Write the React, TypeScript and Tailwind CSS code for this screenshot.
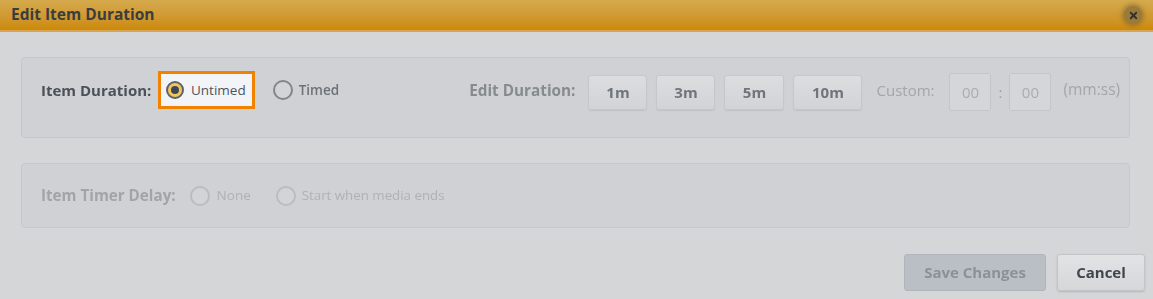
import { X } from "lucide-react";

const font = { fontFamily: '"Source Sans Pro", "Open Sans", "Noto Sans", sans-serif' };

function Radio({ checked, dim }: { checked?: boolean; dim?: boolean }) {
  return (
    <span
      className={`flex flex-shrink-0 items-center justify-center rounded-full border-2 ${
        checked
          ? "h-[18px] w-[18px] border-[#5b636b] bg-[#f4c55c]"
          : dim
          ? "h-[20px] w-[20px] border-[#b9bdc1] bg-[#d3d4d7]"
          : "h-[20px] w-[20px] border-[#80868c] bg-[#d3d4d7]"
      }`}
    >
      {checked && <span className="h-[8px] w-[8px] rounded-full bg-[#3b4752]" />}
    </span>
  );
}

function DurBtn({ label, w }: { label: string; w: string }) {
  return (
    <button
      className={`flex h-[35px] ${w} items-center justify-center rounded-[3px] border border-[#c5c7ca] bg-gradient-to-b from-[#dcdddf] to-[#d2d3d6] text-[15px] font-bold text-[#6f757b] shadow-[0_1px_1px_rgba(0,0,0,0.08)]`}
    >
      {label}
    </button>
  );
}

export default function App() {
  return (
    <div className="relative h-[299px] w-[1153px] overflow-hidden bg-[#d5d6d8]" style={font}>
      <div className="flex h-full flex-col blur-[0.7px]">
        {/* Title bar */}
        <div className="flex h-[32px] flex-shrink-0 items-center justify-between border-b-2 border-[#d9a552] bg-gradient-to-b from-[#d5aa4d] to-[#cc8a02] pl-[11px] pr-[11px]">
          <span className="text-[15.5px] font-bold text-[#3a3d3f]">Edit Item Duration</span>
          <span className="flex h-[18px] w-[18px] items-center justify-center rounded-full bg-[#9a7a38] shadow-[0_0_4px_2px_rgba(110,90,50,0.5)]">
            <X size={11} strokeWidth={4} className="text-[#2d3136]" />
          </span>
        </div>

        {/* Body */}
        <div className="flex flex-1 flex-col px-[21px] pt-[25px]">
          <div className="flex h-[81px] w-[1109px] items-center rounded-[4px] border border-[#c4c6c9] bg-[#d0d1d4] pb-[11px] pl-[19px]">
            <span className="mb-[4px] w-[118px] text-[15px] font-bold text-[#4b5159]">Item Duration:</span>
            <span className="invisible flex items-center gap-[7px]">
              <Radio checked />
              <span className="text-[14px] text-[#525a62]">Untimed</span>
            </span>
            <span className="mb-[4px] ml-[32px] flex items-center gap-[6px]">
              <Radio />
              <span className="text-[13.5px] font-semibold text-[#6b7278]">Timed</span>
            </span>
            <span className="mb-[4px] ml-[130px] text-[15.3px] font-bold text-[#868b90]">Edit Duration:</span>
            <span className="ml-[13px] flex gap-[9px]">
              <DurBtn label="1m" w="w-[59px]" />
              <DurBtn label="3m" w="w-[59px]" />
              <DurBtn label="5m" w="w-[60px]" />
              <DurBtn label="10m" w="w-[69px]" />
            </span>
            <span className="mb-[4px] ml-[14px] text-[15px] text-[#a2a6aa]">Custom:</span>
            <span className="ml-[15px] flex h-[38px] w-[42px] items-center justify-center rounded-[3px] border border-[#c3c5c8] bg-[#d5d6d9] text-[15px] text-[#a9adb1]">
              00
            </span>
            <span className="mx-[7px] text-[15px] text-[#9ea2a6]">:</span>
            <span className="flex h-[38px] w-[42px] items-center justify-center rounded-[3px] border border-[#c3c5c8] bg-[#d5d6d9] text-[15px] text-[#a9adb1]">
              00
            </span>
            <span className="mb-[4px] ml-[12px] text-[15.5px] text-[#a2a6aa]">(mm:ss)</span>
          </div>

          <div className="mt-[25px] flex h-[65px] w-[1109px] items-center rounded-[4px] border border-[#c6c8cb] bg-[#d0d1d4] pl-[19px]">
            <span className="text-[15.2px] font-bold text-[#a0a5aa]">Item Timer Delay:</span>
            <span className="ml-[14px] flex items-center gap-[7px]">
              <Radio dim />
              <span className="text-[13.5px] text-[#aeb2b6]">None</span>
            </span>
            <span className="ml-[25px] flex items-center gap-[6px]">
              <Radio dim />
              <span className="text-[13.3px] text-[#aeb2b6]">Start when media ends</span>
            </span>
          </div>

          <div className="mr-[-13px] mt-[26px] flex justify-end gap-[11px]">
            <button className="h-[37px] w-[142px] rounded-[3px] border border-[#afb5bb] bg-[#b9bfc4] text-[15px] font-bold text-[#8b9197]">
              Save Changes
            </button>
            <button className="h-[37px] w-[88px] rounded-[3px] border border-[#c3c5c8] bg-gradient-to-b from-[#e2e3e5] to-[#d6d7d9] text-[15px] font-bold text-[#3e4650] shadow-[0_1px_2px_rgba(0,0,0,0.15)]">
              Cancel
            </button>
          </div>
        </div>
      </div>

      {/* Tutorial highlight */}
      <div className="absolute left-[158px] top-[71px] flex h-[38px] w-[97px] items-center gap-[7px] border-[3px] border-[#f08200] bg-[#f3f4f7] pl-[5px]">
        <Radio checked />
        <span className="text-[13.5px] text-[#4a5560]">Untimed</span>
      </div>
    </div>
  );
}
